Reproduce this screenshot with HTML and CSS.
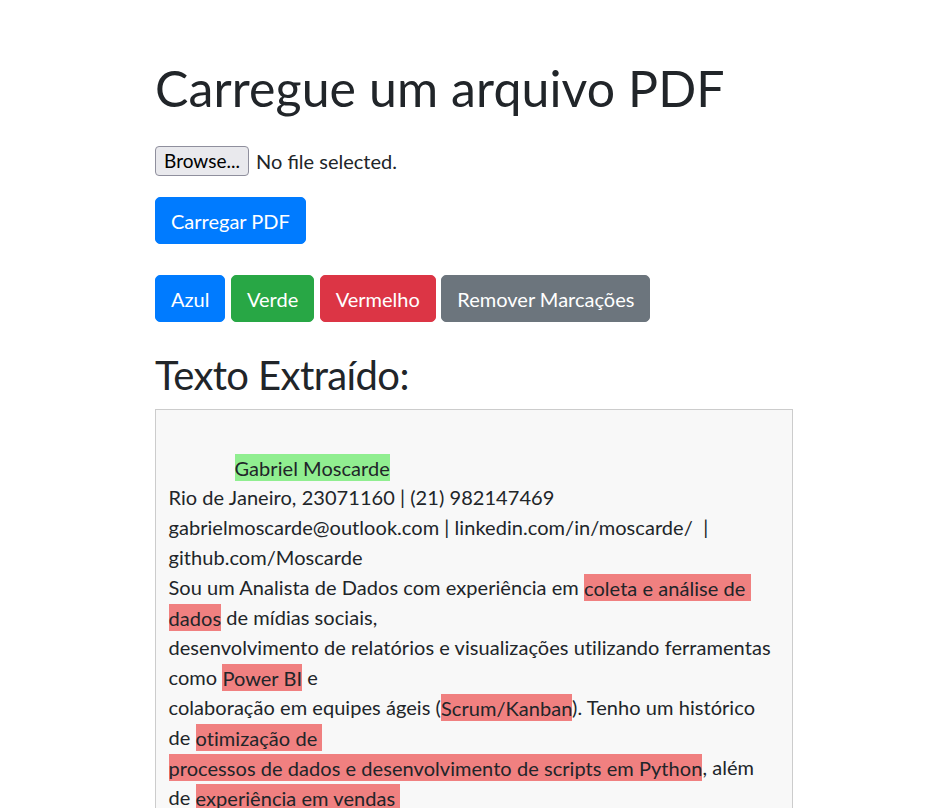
FILE: index.html
```html
<!DOCTYPE html>
<html lang="pt-BR">
<head>
<meta charset="utf-8">
<title>Carregue um arquivo PDF</title>
<link rel="stylesheet" href="styles.css">
</head>
<body>
<main class="page">
  <h1 class="title">Carregue um arquivo PDF</h1>
  <form class="upload-form">
    <div class="file-row">
      <span class="file-btn">Browse...</span>
      <span class="file-label">No file selected.</span>
    </div>
    <button type="button" class="btn btn-primary">Carregar PDF</button>
  </form>
  <div class="color-bar">
    <button type="button" class="btn btn-primary">Azul</button>
    <button type="button" class="btn btn-success">Verde</button>
    <button type="button" class="btn btn-danger">Vermelho</button>
    <button type="button" class="btn btn-secondary">Remover Marcações</button>
  </div>
  <h2 class="subtitle">Texto Extraído:</h2>
  <div class="extracted">
    <div class="line"> </div>
    <div class="line"><span class="hl hl-green indent">Gabriel Moscarde</span></div>
    <div class="line">Rio de Janeiro, 23071160 | (21) 982147469</div>
    <div class="line">gabrielmoscarde@outlook.com | linkedin.com/in/moscarde/  |</div>
    <div class="line">github.com/Moscarde</div>
    <div class="line">Sou um Analista de Dados com experiência em <span class="hl hl-red">coleta e análise de </span></div>
    <div class="line"><span class="hl hl-red">dados</span> de mídias sociais,</div>
    <div class="line">desenvolvimento de relatórios e visualizações utilizando ferramentas</div>
    <div class="line">como <span class="hl hl-red">Power BI</span> e</div>
    <div class="line">colaboração em equipes ágeis (<span class="hl hl-red">Scrum/Kanban</span>). Tenho um histórico</div>
    <div class="line">de <span class="hl hl-red">otimização de </span></div>
    <div class="line"><span class="hl hl-red">processos de dados e desenvolvimento de scripts em Python</span>, além</div>
    <div class="line">de <span class="hl hl-red">experiência em vendas </span></div>
  </div>
</main>
</body>
</html>
```
FILE: styles.css
```css
html, body {
  margin: 0;
  padding: 0;
  background: #fff;
}

body {
  font-family: "Lato", "Noto Sans", sans-serif;
  font-size: 20px;
  line-height: 30px;
  color: #212529;
}

.page {
  width: 638px;
  margin-left: 155px;
  padding-top: 58px;
}

.title {
  margin: 0;
  font-size: 50px;
  line-height: 60px;
  font-weight: 400;
  letter-spacing: 0.1px;
  color: #212529;
}

.upload-form {
  margin: 0;
}

.file-row {
  display: flex;
  align-items: center;
  gap: 7px;
  height: 30px;
  margin: 28px 0 21px;
}

.file-btn {
  box-sizing: border-box;
  height: 30px;
  width: 94px;
  display: flex;
  align-items: center;
  justify-content: center;
  background: #e9e9ed;
  border: 1px solid #8f8f9d;
  border-radius: 4px;
  color: #000;
  font-size: 19px;
}

.file-label {
  font-size: 20px;
  color: #212529;
}

.btn {
  display: inline-block;
  box-sizing: border-box;
  font-family: inherit;
  font-size: 20px;
  line-height: 30px;
  padding: 7.5px 15px;
  border: 1px solid transparent;
  border-radius: 5px;
  color: #fff;
  cursor: pointer;
}

.btn-primary { background: #007bff; border-color: #007bff; }
.btn-success { background: #28a745; border-color: #28a745; }
.btn-danger { background: #dc3545; border-color: #dc3545; }
.btn-secondary { background: #6c757d; border-color: #6c757d; }

.color-bar {
  display: flex;
  gap: 5.5px;
  margin-top: 31px;
}

.subtitle {
  margin: 28.5px 0 10px;
  font-size: 40px;
  line-height: 48px;
  font-weight: 400;
  letter-spacing: -0.6px;
  color: #212529;
}

.extracted {
  box-sizing: border-box;
  width: 638px;
  padding: 12.5px;
  background: #f8f8f8;
  border: 1px solid #cccccc;
  letter-spacing: 0.05px;
}

.line {
  height: 30px;
  white-space: pre;
}

.hl {
  padding: 1.5px 0;
}

.hl-green { background: #90ee90; }
.hl-red { background: #f08080; }

.indent {
  margin-left: 66px;
}
```
